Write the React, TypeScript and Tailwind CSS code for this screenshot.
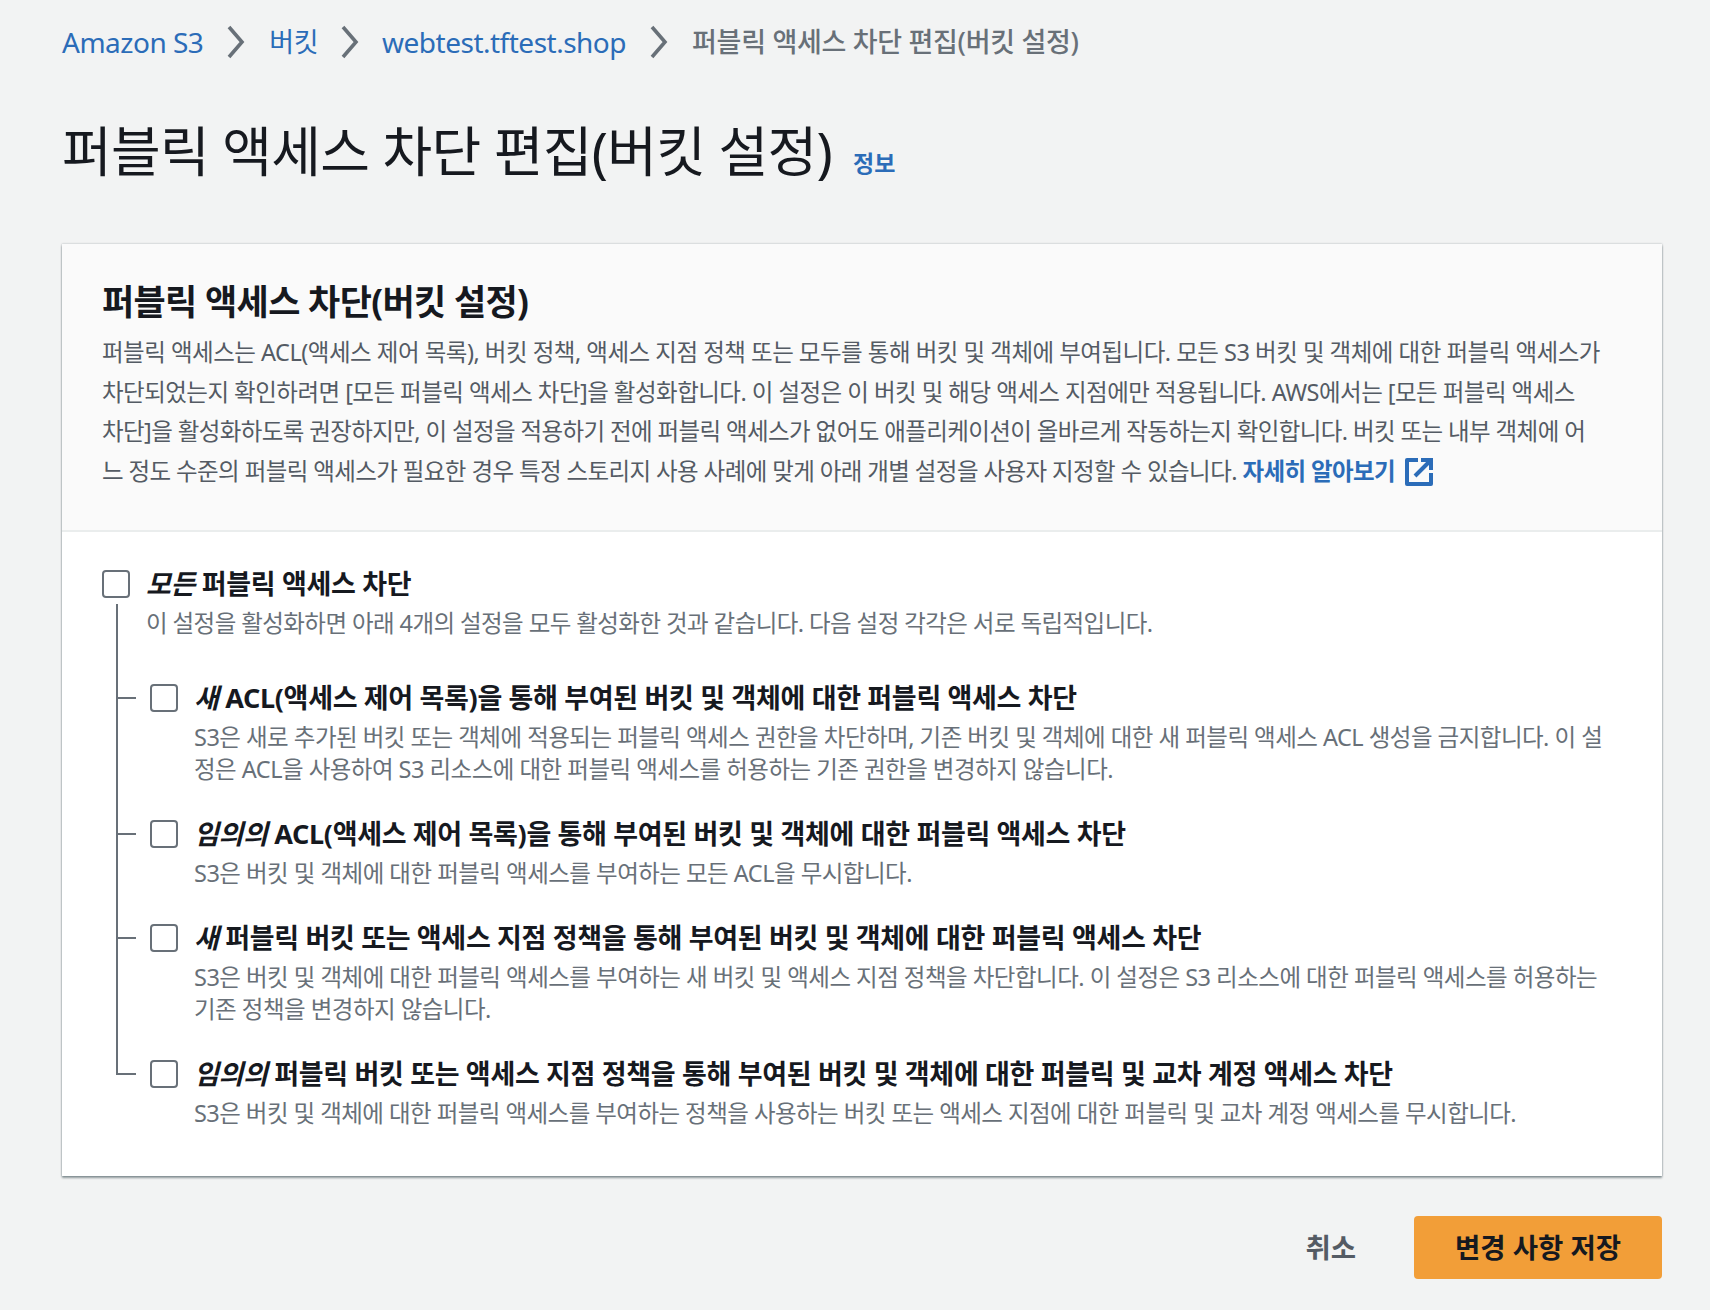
import React from "react";

const FONT = "[font-family:'Noto_Sans','Noto_Sans_CJK_KR',sans-serif]";

const Chevron = () => (
  <svg width="20" height="34" viewBox="0 0 20 34" fill="none" className="shrink-0">
    <path d="M3 2l13 15L3 32" stroke="#687078" strokeWidth="3.6" />
  </svg>
);

const ExternalIcon = () => (
  <svg width="28" height="28" viewBox="0 0 28 28" fill="none" className="inline-block ml-[10px] align-[-6px]">
    <path d="M13 2H2v24h24V15" stroke="#2b6cb8" strokeWidth="4" strokeLinejoin="round" />
    <path d="M16 2h10v10M26 2L10 18" stroke="#2b6cb8" strokeWidth="4" />
  </svg>
);

const Checkbox = () => (
  <div className="w-[28px] h-[28px] shrink-0 rounded-[4px] border-2 border-[#687078] bg-white"></div>
);

type Item = { em: string; title: string; desc: string[] };

const items: Item[] = [
  {
    em: "새",
    title: "ACL(액세스 제어 목록)을 통해 부여된 버킷 및 객체에 대한 퍼블릭 액세스 차단",
    desc: [
      "S3은 새로 추가된 버킷 또는 객체에 적용되는 퍼블릭 액세스 권한을 차단하며, 기존 버킷 및 객체에 대한 새 퍼블릭 액세스 ACL 생성을 금지합니다. 이 설",
      "정은 ACL을 사용하여 S3 리소스에 대한 퍼블릭 액세스를 허용하는 기존 권한을 변경하지 않습니다.",
    ],
  },
  {
    em: "임의의",
    title: "ACL(액세스 제어 목록)을 통해 부여된 버킷 및 객체에 대한 퍼블릭 액세스 차단",
    desc: ["S3은 버킷 및 객체에 대한 퍼블릭 액세스를 부여하는 모든 ACL을 무시합니다."],
  },
  {
    em: "새",
    title: "퍼블릭 버킷 또는 액세스 지점 정책을 통해 부여된 버킷 및 객체에 대한 퍼블릭 액세스 차단",
    desc: [
      "S3은 버킷 및 객체에 대한 퍼블릭 액세스를 부여하는 새 버킷 및 액세스 지점 정책을 차단합니다. 이 설정은 S3 리소스에 대한 퍼블릭 액세스를 허용하는",
      "기존 정책을 변경하지 않습니다.",
    ],
  },
  {
    em: "임의의",
    title: "퍼블릭 버킷 또는 액세스 지점 정책을 통해 부여된 버킷 및 객체에 대한 퍼블릭 및 교차 계정 액세스 차단",
    desc: ["S3은 버킷 및 객체에 대한 퍼블릭 액세스를 부여하는 정책을 사용하는 버킷 또는 액세스 지점에 대한 퍼블릭 및 교차 계정 액세스를 무시합니다."],
  },
];

const Title = ({ em, title }: { em: string; title: string }) => (
  <div className="text-[27px] leading-[40px] font-bold text-[#16191f] tracking-[-0.33px] whitespace-nowrap">
    <em>{em}</em> {title}
  </div>
);

const App = () => {
  return (
    <div className={`min-h-screen bg-[#f2f3f3] pl-[62px] pr-[48px] pt-[22px] pb-[31px] ${FONT}`}>
      <div className="flex items-center h-[40px] text-[28px] tracking-[-0.5px] whitespace-nowrap">
        <span className="text-[#2b6cb8]">Amazon S3</span>
        <div className="mx-[23px]"><Chevron /></div>
        <span className="text-[#2b6cb8] text-[27px]">버킷</span>
        <div className="ml-[22px] mr-[22px]"><Chevron /></div>
        <span className="text-[#2b6cb8]">webtest.tftest.shop</span>
        <div className="mx-[23px]"><Chevron /></div>
        <span className="text-[#687078] text-[27px] tracking-[-0.3px] font-medium">퍼블릭 액세스 차단 편집(버킷 설정)</span>
      </div>

      <div className="flex items-baseline mt-[54px] h-[70px]">
        <h1 className="text-[54px] leading-[70px] text-[#16191f] tracking-[-0.7px] whitespace-nowrap">퍼블릭 액세스 차단 편집(버킷 설정)</h1>
        <span className="ml-[21px] text-[23px] font-bold text-[#2b6cb8]">정보</span>
      </div>

      <div className="mt-[58px] bg-white shadow-[0_2px_2px_rgba(0,28,36,0.4),0_0_2px_rgba(0,28,36,0.3)]">
        <div className="bg-[#fafafa] border-b-2 border-[#eaeded] px-[40px] pt-[30px] h-[288px]">
          <h2 className="text-[35px] leading-[56px] font-bold text-[#16191f] tracking-[-0.66px] whitespace-nowrap mb-[3px]">퍼블릭 액세스 차단(버킷 설정)</h2>
          <div className="text-[23.5px] leading-[39.6px] text-[#545b64] whitespace-nowrap">
            <div className="tracking-[-0.5px]">퍼블릭 액세스는 ACL(액세스 제어 목록), 버킷 정책, 액세스 지점 정책 또는 모두를 통해 버킷 및 객체에 부여됩니다. 모든 S3 버킷 및 객체에 대한 퍼블릭 액세스가</div>
            <div className="tracking-[-0.53px]">차단되었는지 확인하려면 [모든 퍼블릭 액세스 차단]을 활성화합니다. 이 설정은 이 버킷 및 해당 액세스 지점에만 적용됩니다. AWS에서는 [모든 퍼블릭 액세스</div>
            <div className="tracking-[-0.61px]">차단]을 활성화하도록 권장하지만, 이 설정을 적용하기 전에 퍼블릭 액세스가 없어도 애플리케이션이 올바르게 작동하는지 확인합니다. 버킷 또는 내부 객체에 어</div>
            <div className="tracking-[-0.6px]">
              느 정도 수준의 퍼블릭 액세스가 필요한 경우 특정 스토리지 사용 사례에 맞게 아래 개별 설정을 사용자 지정할 수 있습니다.{" "}
              <span className="font-bold text-[#2b6cb8]">자세히 알아보기</span>
              <ExternalIcon />
            </div>
          </div>
        </div>

        <div className="pl-[40px] pr-[40px] pt-[32px] pb-[47px] text-[#687078]">
          <div className="flex items-center gap-[16px] h-[40px]">
            <Checkbox />
            <Title em="모든" title="퍼블릭 액세스 차단" />
          </div>
          <div className="ml-[14px] border-l-2 border-[#687078] pl-[28px] pb-[39px] text-[23.5px] leading-[32px] tracking-[-0.58px] whitespace-nowrap pt-[3px]">
            이 설정을 활성화하면 아래 4개의 설정을 모두 활성화한 것과 같습니다. 다음 설정 각각은 서로 독립적입니다.
          </div>
          {items.map((it, i) => {
            const last = i === items.length - 1;
            return (
              <div key={i} className="flex ml-[14px]">
                <div className={last ? "w-[20px] h-[21px] shrink-0 border-l-2 border-b-2 border-[#687078]" : "w-[20px] shrink-0 border-l-2 border-[#687078] pt-[19px]"}>
                  {!last && <div className="h-[2px] bg-[#687078]"></div>}
                </div>
                <div className={last ? "ml-[14px] flex items-start gap-[16px]" : "ml-[14px] flex items-start gap-[16px] pb-[29px]"}>
                  <div className="mt-[6px]"><Checkbox /></div>
                  <div>
                    <Title em={it.em} title={it.title} />
                    <div className={last ? "mt-[3px] text-[23.5px] leading-[32px] tracking-[-0.55px] whitespace-nowrap" : "mt-[3px] text-[23.5px] leading-[32px] tracking-[-0.52px] whitespace-nowrap"}>
                      {it.desc.map((d, j) => (
                        <div key={j}>{d}</div>
                      ))}
                    </div>
                  </div>
                </div>
              </div>
            );
          })}
        </div>
      </div>

      <div className="flex justify-end items-center mt-[40px] gap-[58px]">
        <span className="text-[27.5px] font-bold text-[#545b64]">취소</span>
        <div className="w-[248px] h-[63px] flex items-center justify-center rounded-[4px] bg-[#f29e38] text-[27.5px] font-bold text-[#16191f]">
          변경 사항 저장
        </div>
      </div>
    </div>
  );
};

export default App;
